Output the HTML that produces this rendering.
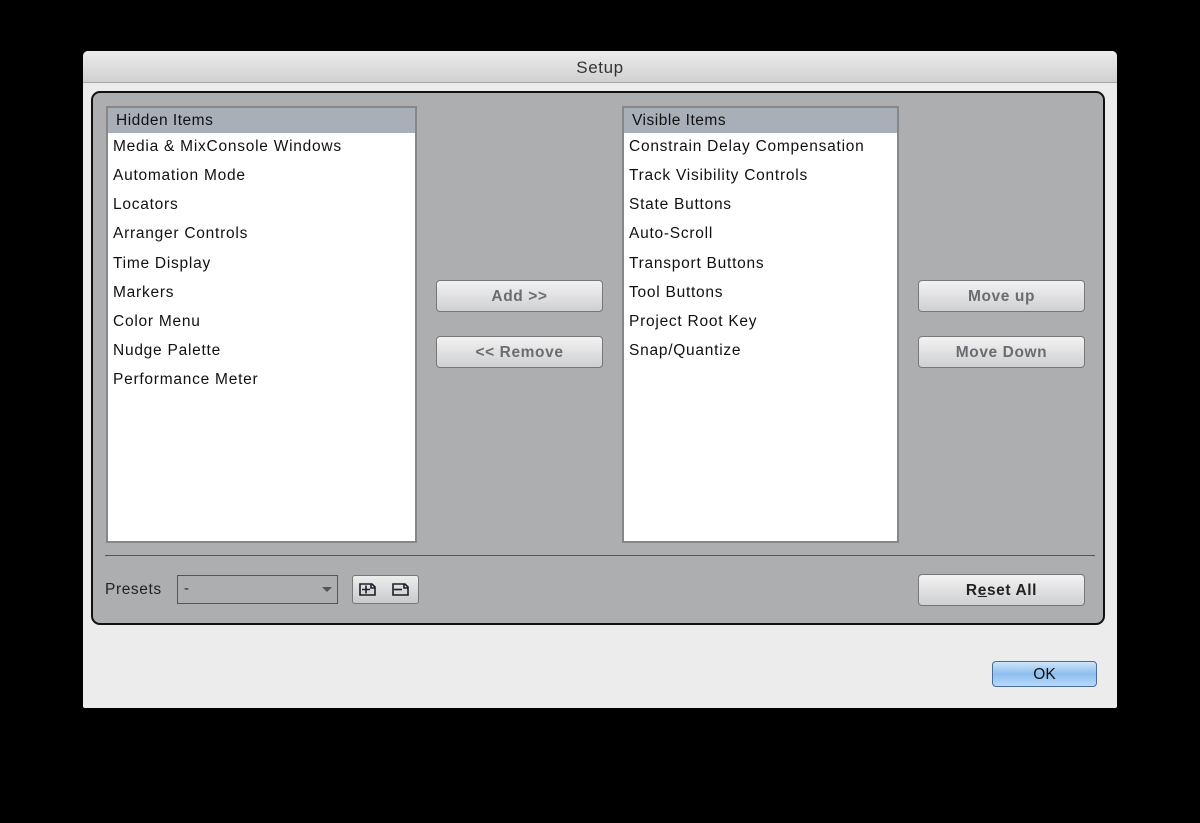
<!DOCTYPE html>
<html><head><style>
*{margin:0;padding:0;box-sizing:border-box}
body{width:1200px;height:823px;background:#000;position:relative;font-family:"Liberation Sans",sans-serif;overflow:hidden}
.win{position:absolute;left:83px;top:51px;width:1034px;height:657px;background:#ececec;border-radius:5px 5px 2px 2px;overflow:hidden}
.title{height:32px;background:linear-gradient(#ececec,#d0d0d0);border-bottom:1px solid #a8a8a8;text-align:center;font-size:17px;line-height:34px;color:#333;letter-spacing:.6px}
.panel{position:absolute;left:8px;top:40px;width:1014px;height:534px;background:#adaeb0;border:2px solid #111;border-radius:9px}
.list{position:absolute;top:13px;height:437px;background:#fff;border:2px solid #858789}
.hdr{height:25px;background:#a9afb7;font-size:15.5px;line-height:25px;padding-left:8px;color:#111;letter-spacing:.5px}
.it{height:29.15px;font-size:15.5px;line-height:28px;padding-left:5px;color:#111;letter-spacing:.75px}
.btn{position:absolute;width:167px;height:32px;border:1px solid #777;border-radius:4px;background:linear-gradient(#f2f2f3,#cfd0d2);font-size:15.5px;font-weight:bold;color:#6a6d70;text-align:center;line-height:31px;letter-spacing:.6px}
</style></head><body>
<div class="win">
<div class="title">Setup</div>
<div class="panel">
 <div class="list" style="left:13px;width:311px">
  <div class="hdr">Hidden Items</div>
  <div class="it">Media &amp; MixConsole Windows</div>
  <div class="it">Automation Mode</div>
  <div class="it">Locators</div>
  <div class="it">Arranger Controls</div>
  <div class="it">Time Display</div>
  <div class="it">Markers</div>
  <div class="it">Color Menu</div>
  <div class="it">Nudge Palette</div>
  <div class="it">Performance Meter</div>
 </div>
 <div class="list" style="left:529px;width:277px">
  <div class="hdr">Visible Items</div>
  <div class="it">Constrain Delay Compensation</div>
  <div class="it">Track Visibility Controls</div>
  <div class="it">State Buttons</div>
  <div class="it">Auto-Scroll</div>
  <div class="it">Transport Buttons</div>
  <div class="it">Tool Buttons</div>
  <div class="it">Project Root Key</div>
  <div class="it">Snap/Quantize</div>
 </div>
 <div class="btn" style="left:343px;top:187px">Add &gt;&gt;</div>
 <div class="btn" style="left:343px;top:243px">&lt;&lt; Remove</div>
 <div class="btn" style="left:825px;top:187px">Move up</div>
 <div class="btn" style="left:825px;top:243px">Move Down</div>
 <div style="position:absolute;left:12px;top:462px;width:990px;height:1px;background:#555"></div>
 <div style="position:absolute;left:12px;top:488px;font-size:15.5px;color:#222;letter-spacing:.6px">Presets</div>
 <div style="position:absolute;left:84px;top:482px;width:161px;height:29px;border:1px solid #555;background:#adaeb0;font-size:15px;line-height:26px;padding-left:6px;color:#222">-<span style="position:absolute;right:5px;top:11px;border:5px solid transparent;border-top:5px solid #555;border-bottom:0"></span></div>
 <div style="position:absolute;left:259px;top:482px;width:67px;height:29px;border:1px solid #777;border-radius:3px;background:linear-gradient(#eceded,#c9cacc)">
  <svg width="67" height="29" style="position:absolute;left:0;top:0" fill="none" stroke="#1a1f2a" stroke-width="1.6">
   <path d="M7 8h12l3 3v8H7z"/><path d="M18 8v4h4"/><path d="M9 13.5h8M13 9.5v8"/>
   <path d="M40 8h12l3 3v8H40z"/><path d="M51 8v4h4"/><path d="M41 13.5h8"/>
  </svg>
 </div>
 <div class="btn" style="left:825px;top:481px;color:#222">R<u>e</u>set All</div>
</div>
<div style="position:absolute;left:909px;top:610px;width:105px;height:26px;border:1px solid #4a6c9a;border-radius:4px;background:linear-gradient(#cfe5fb,#8ebdef 50%,#b7dafc);text-align:center;font-size:15.5px;line-height:26px;color:#111">OK</div>
</div>
</body></html>
